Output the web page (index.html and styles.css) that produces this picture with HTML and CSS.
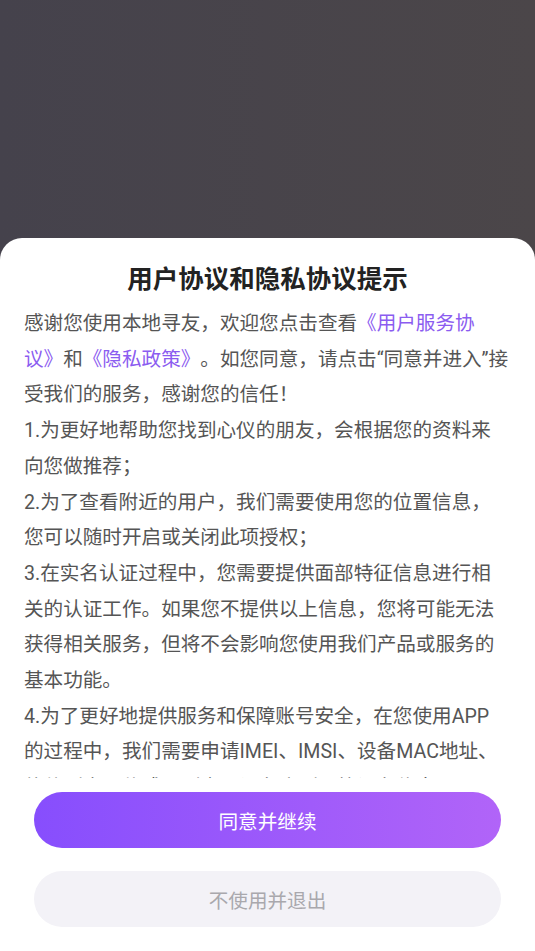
FILE: index.html
```html
<!DOCTYPE html>
<html lang="zh-CN">
<head>
    <meta charset="UTF-8">
    <meta name="viewport" content="width=device-width, initial-scale=1.0">
    <title>用户协议和隐私协议提示</title>
    <link rel="stylesheet" href="styles.css">
</head>
<body>

<div class="backdrop"></div>

<div class="sheet">
    <h2 class="sheet-title">用户协议和隐私协议提示</h2>
    <div class="sheet-body">
        <p>感谢您使用本地寻友，欢迎您点击查看<a href="#">《用户服务协议》</a>和<a href="#">《隐私政策》</a>。如您同意，请点击“同意并进入”接受我们的服务，感谢您的信任！</p>
        <p>1.为更好地帮助您找到心仪的朋友，会根据您的资料来向您做推荐；</p>
        <p>2.为了查看附近的用户，我们需要使用您的位置信息，您可以随时开启或关闭此项授权；</p>
        <p>3.在实名认证过程中，您需要提供面部特征信息进行相关的认证工作。如果您不提供以上信息，您将可能无法获得相关服务，但将不会影响您使用我们产品或服务的基本功能。</p>
        <p>4.为了更好地提供服务和保障账号安全，在您使用APP的过程中，我们需要申请IMEI、IMSI、设备MAC地址、软件列表、传感器列表、设备序列号等设备信息，用于识别设备和账号安全风控。</p>
    </div>
    <div class="sheet-actions">
        <button class="btn btn-primary">同意并继续</button>
        <button class="btn btn-secondary">不使用并退出</button>
    </div>
</div>

</body>
</html>
```

FILE: styles.css
```css
html, body {
    margin: 0;
    padding: 0;
    height: 100%;
}
body {
    font-family: Roboto, "Noto Sans CJK SC", sans-serif;
    background: linear-gradient(90deg, #45424c, #4b4649);
    display: flex;
    flex-direction: column;
    overflow: hidden;
}
.backdrop {
    height: 238px;
    flex-shrink: 0;
}
.sheet {
    flex: 1;
    background: #ffffff;
    border-radius: 22px 22px 0 0;
    display: flex;
    flex-direction: column;
    padding-top: 24px;
}
.sheet-title {
    margin: 0 0 10px;
    text-align: center;
    font-size: 25.5px;
    line-height: 34px;
    font-weight: bold;
    color: #222222;
}
.sheet-body {
    height: 472px;
    overflow: hidden;
    padding: 0 26.8px 0 24px;
    color: #555555;
    font-size: 19.6px;
    line-height: 35.7px;
    text-spacing-trim: space-all;
}
.sheet-body p {
    margin: 0;
}
.sheet-body a {
    color: #8b5cf0;
    text-decoration: none;
}
.sheet-actions {
    display: flex;
    flex-direction: column;
    gap: 23px;
    padding: 14px 34px 0;
}
.btn {
    height: 56px;
    border: none;
    border-radius: 28px;
    font-family: Roboto, "Noto Sans CJK SC", sans-serif;
    font-size: 19.6px;
    cursor: pointer;
}
.btn-primary {
    background: linear-gradient(90deg, #874efd, #b164f8);
    color: #ffffff;
}
.btn-secondary {
    background: #f3f2f7;
    color: #a9a8ad;
}
```
